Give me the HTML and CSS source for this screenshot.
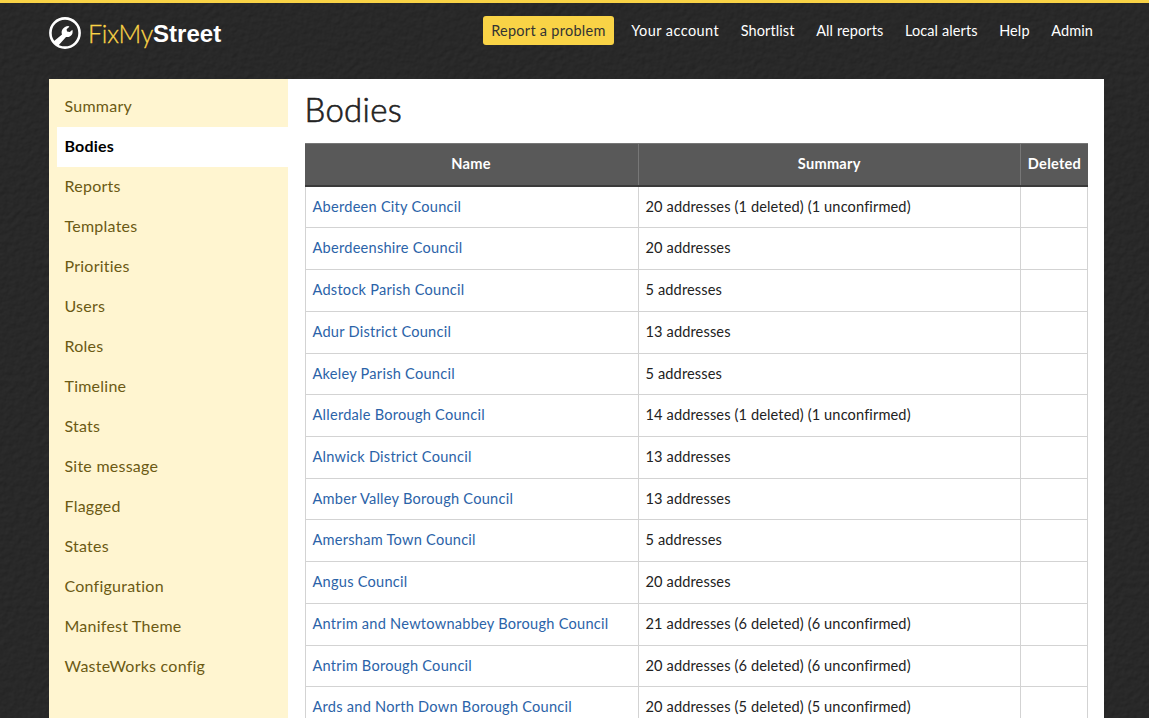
FILE: index.html
```html
<!DOCTYPE html>
<html lang="en">
<head>
<meta charset="utf-8">
<title>Bodies :: FixMyStreet</title>
<link rel="stylesheet" href="styles.css">
</head>
<body>
<svg class="asphalt" aria-hidden="true">
  <filter id="grain" x="0" y="0" width="100%" height="100%" color-interpolation-filters="sRGB">
    <feTurbulence type="fractalNoise" baseFrequency="0.17" numOctaves="3" seed="8" result="noise"/>
    <feDiffuseLighting in="noise" surfaceScale="0.45" diffuseConstant="0.198" lighting-color="#ffffff">
      <feDistantLight azimuth="235" elevation="53"/>
    </feDiffuseLighting>
  </filter>
  <rect width="100%" height="100%" filter="url(#grain)"/>
</svg>
<header class="site-header">
  <a class="logo">
    <svg class="logo-mark" viewBox="0 0 32 32">
      <circle cx="16" cy="16" r="14.6" fill="none" stroke="#fff" stroke-width="2.6"/>
      <path d="M4.5 24.5 L13 17.6 C11.6 13.4 14.2 9.6 19.4 9 L20.4 9.8 L17.6 12.2 L18 14.6 L20.8 15 L23.4 12.8 C24.6 17.4 21.4 20.8 17 20 L9.4 28.5 C7.3 27.4 5.6 26 4.5 24.5 Z" fill="#fff"/>
    </svg>
    <span class="logo-text"><span class="logo-thin">FixMy</span><span class="logo-bold">Street</span></span>
  </a>
  <nav class="main-nav">
    <a class="report">Report a problem</a>
    <a>Your account</a>
    <a>Shortlist</a>
    <a>All reports</a>
    <a>Local alerts</a>
    <a>Help</a>
    <a>Admin</a>
  </nav>
</header>
<div class="page">
  <nav class="sidebar">
    <a>Summary</a>
    <a class="active">Bodies</a>
    <a>Reports</a>
    <a>Templates</a>
    <a>Priorities</a>
    <a>Users</a>
    <a>Roles</a>
    <a>Timeline</a>
    <a>Stats</a>
    <a>Site message</a>
    <a>Flagged</a>
    <a>States</a>
    <a>Configuration</a>
    <a>Manifest Theme</a>
    <a>WasteWorks config</a>
  </nav>
  <main class="content">
    <h1>Bodies</h1>
    <div class="table">
      <div class="row head"><span>Name</span><span>Summary</span><span>Deleted</span></div>
      <div class="row"><a>Aberdeen City Council</a><span>20 addresses (1 deleted) (1 unconfirmed)</span><span></span></div>
      <div class="row"><a>Aberdeenshire Council</a><span>20 addresses</span><span></span></div>
      <div class="row"><a>Adstock Parish Council</a><span>5 addresses</span><span></span></div>
      <div class="row"><a>Adur District Council</a><span>13 addresses</span><span></span></div>
      <div class="row"><a>Akeley Parish Council</a><span>5 addresses</span><span></span></div>
      <div class="row"><a>Allerdale Borough Council</a><span>14 addresses (1 deleted) (1 unconfirmed)</span><span></span></div>
      <div class="row"><a>Alnwick District Council</a><span>13 addresses</span><span></span></div>
      <div class="row"><a>Amber Valley Borough Council</a><span>13 addresses</span><span></span></div>
      <div class="row"><a>Amersham Town Council</a><span>5 addresses</span><span></span></div>
      <div class="row"><a>Angus Council</a><span>20 addresses</span><span></span></div>
      <div class="row"><a>Antrim and Newtownabbey Borough Council</a><span>21 addresses (6 deleted) (6 unconfirmed)</span><span></span></div>
      <div class="row"><a>Antrim Borough Council</a><span>20 addresses (6 deleted) (6 unconfirmed)</span><span></span></div>
      <div class="row"><a>Ards and North Down Borough Council</a><span>20 addresses (5 deleted) (5 unconfirmed)</span><span></span></div>
    </div>
  </main>
</div>
</body>
</html>
```
FILE: styles.css
```css
* { box-sizing: border-box; }
body {
  margin: 0;
  height: 718px;
  overflow: hidden;
  display: flex;
  flex-direction: column;
  background: #282828;
  border-top: 3px solid #f9d346;
  font-family: Lato, "Open Sans", sans-serif;
  color: #222;
}
.asphalt { position: absolute; z-index: -1; top: 3px; left: 0; width: 100%; height: 715px; }
.site-header {
  flex: none;
  height: 76px;
  padding: 13px 48px 0 49px;
  display: flex;
  justify-content: space-between;
  align-items: flex-start;
}
.logo { display: flex; align-items: center; gap: 7px; height: 34px; }
.logo-mark { width: 32px; height: 32px; }
.logo-text { display: flex; white-space: nowrap; line-height: 32px; }
.logo-thin { color: #f9d346; font-size: 25px; font-weight: 300; letter-spacing: -0.2px; -webkit-text-stroke: 0.3px #f9d346; }
.logo-bold { color: #fff; font: bold 24px/33px "Liberation Sans", Arial, sans-serif; letter-spacing: 0; }
.main-nav { display: flex; gap: 5.6px; font-size: 14.5px; letter-spacing: 0.1px; line-height: 29px; white-space: nowrap; }
.main-nav a { color: #fff; padding: 0 8px; }
.main-nav a:nth-child(2) { letter-spacing: 0.43px; }
.main-nav .report { height: 29px; background: #f9d346; color: #333; border-radius: 3px; margin-right: 4px; letter-spacing: 0.27px; }
.page { flex: 1; min-height: 0; display: flex; margin: 0 45px 0 48.5px; background: #fff; }
.sidebar { width: 239.5px; flex: none; background: #fff5d0; padding: 8px 0 0 8px; }
.sidebar a {
  display: block;
  height: 40px;
  padding-left: 8px;
  font-size: 16px;
  letter-spacing: 0.24px;
  line-height: 38px;
  color: #6b5a14;
}
.sidebar .active { background: #fff; color: #000; font-weight: 700; letter-spacing: 0.2px; }
.content { flex: 1; padding: 9px 16px 0 16.5px; }
h1 { margin: 0 0 13px; font-size: 33px; font-weight: 300; line-height: 42px; letter-spacing: 0.3px; -webkit-text-stroke: 0.6px #222; }
.table { border: 1px solid #d3d3d3; border-bottom: 0; font-size: 14.6px; letter-spacing: 0.24px; }
.row { display: grid; grid-template-columns: 332px 382.5px 1fr; height: 41.73px; line-height: 40px; border-bottom: 1px solid #d3d3d3; white-space: nowrap; }
.row > * { padding-left: 7px; border-left: 1px solid #d3d3d3; }
.row > :first-child { border-left: 0; }
.row > span { letter-spacing: 0.12px; }
.row a { color: #2b63a8; }
.head { grid-template-columns: 333px 382.5px 1fr; height: 43.7px; background: #595959; color: #fff; font-weight: 700; text-align: center; border-bottom: 2px solid #3a3a3a; margin: -1px -1px 0; border-top: 1px solid #777; }
.head > span { padding-left: 0; border-color: #777; letter-spacing: 0.24px; }
```
